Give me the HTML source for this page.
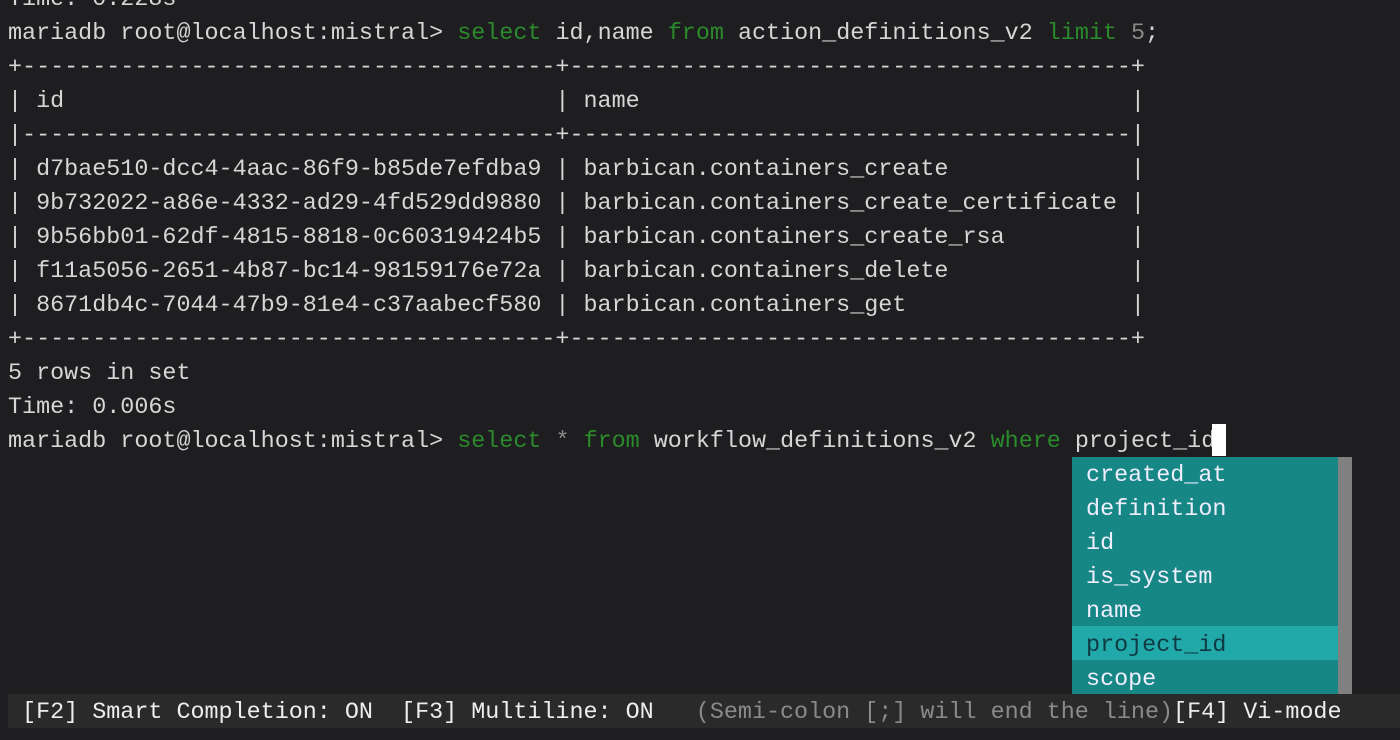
<!DOCTYPE html>
<html><head><meta charset="utf-8"><style>
html,body{margin:0;padding:0;background:#1e1d20;width:1400px;height:740px;overflow:hidden}
.l{position:absolute;left:8px;height:34px;line-height:34px;font-family:"Liberation Mono","DejaVu Sans Mono",monospace;font-size:23.4px;color:#d6d6d6;white-space:pre;margin-top:2px}
.g{color:#2b8a2b}.d{color:#8a8a8a}
#sb{position:absolute;left:8px;top:694px;width:1392px;height:34px;background:#2a2a2a}
#pop{position:absolute;left:1072px;top:457px;width:266px;height:237px;background:#178785}
#scr{position:absolute;left:1338px;top:457px;width:14px;height:237px;background:#808080}
#sel{position:absolute;left:1072px;top:626px;width:266px;height:34px;background:#21a9a9}
#cur{position:absolute;left:1212px;top:424px;width:14px;height:32px;background:#fff}
</style></head><body>
<div class="l" style="top:-19px">Time: 0.228s</div>
<div class="l" style="top:15px">mariadb root@localhost:mistral&gt; <span class="g">select</span> id,name <span class="g">from</span> action_definitions_v2 <span class="g">limit</span> <span class="d">5</span>;</div>
<div class="l" style="top:49px">+--------------------------------------+----------------------------------------+</div>
<div class="l" style="top:83px">| id                                   | name                                   |</div>
<div class="l" style="top:117px">|--------------------------------------+----------------------------------------|</div>
<div class="l" style="top:151px">| d7bae510-dcc4-4aac-86f9-b85de7efdba9 | barbican.containers_create             |</div>
<div class="l" style="top:185px">| 9b732022-a86e-4332-ad29-4fd529dd9880 | barbican.containers_create_certificate |</div>
<div class="l" style="top:219px">| 9b56bb01-62df-4815-8818-0c60319424b5 | barbican.containers_create_rsa         |</div>
<div class="l" style="top:253px">| f11a5056-2651-4b87-bc14-98159176e72a | barbican.containers_delete             |</div>
<div class="l" style="top:287px">| 8671db4c-7044-47b9-81e4-c37aabecf580 | barbican.containers_get                |</div>
<div class="l" style="top:321px">+--------------------------------------+----------------------------------------+</div>
<div class="l" style="top:355px">5 rows in set</div>
<div class="l" style="top:389px">Time: 0.006s</div>
<div class="l" style="top:423px">mariadb root@localhost:mistral&gt; <span class="g">select</span> <span class="d">*</span> <span class="g">from</span> workflow_definitions_v2 <span class="g">where</span> project_id</div>
<div id="cur"></div>
<div id="pop"></div><div id="sel"></div><div id="scr"></div>
<div class="l" style="left:1072px;top:457px;color:#eef"> created_at</div>
<div class="l" style="left:1072px;top:491px;color:#eef"> definition</div>
<div class="l" style="left:1072px;top:525px;color:#eef"> id</div>
<div class="l" style="left:1072px;top:559px;color:#eef"> is_system</div>
<div class="l" style="left:1072px;top:593px;color:#eef"> name</div>
<div class="l" style="left:1072px;top:627px;color:#0f3a44"> project_id</div>
<div class="l" style="left:1072px;top:661px;color:#eef"> scope</div>
<div id="sb"></div>
<div class="l" style="top:694px;color:#eee"> [F2] Smart Completion: ON  [F3] Multiline: ON   <span class="d">(Semi-colon [;] will end the line)</span>[F4] Vi-mode</div>
</body></html>
